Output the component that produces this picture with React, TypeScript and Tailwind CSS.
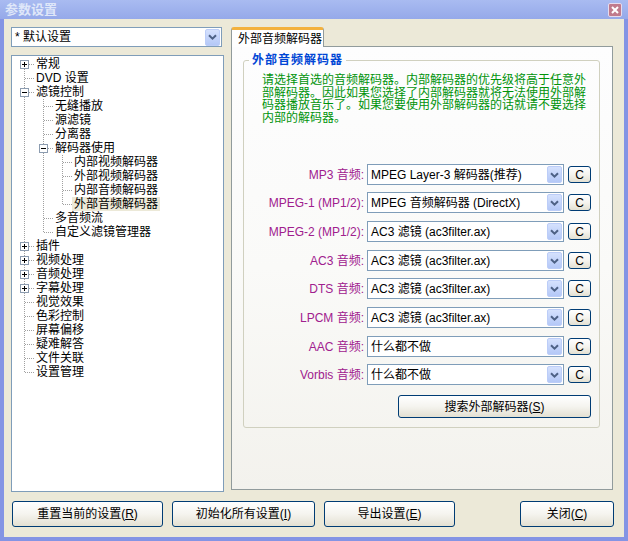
import React from "react";

type TreeNode = {
  label: string;
  level: number;
  box?: "+" | "-";
  first?: boolean;
  last?: boolean;
  selected?: boolean;
};

const TREE: TreeNode[] = [
  { label: "常规", level: 0, box: "+", first: true },
  { label: "DVD 设置", level: 0 },
  { label: "滤镜控制", level: 0, box: "-" },
  { label: "无缝播放", level: 1 },
  { label: "源滤镜", level: 1 },
  { label: "分离器", level: 1 },
  { label: "解码器使用", level: 1, box: "-" },
  { label: "内部视频解码器", level: 2 },
  { label: "外部视频解码器", level: 2 },
  { label: "内部音频解码器", level: 2 },
  { label: "外部音频解码器", level: 2, last: true, selected: true },
  { label: "多音频流", level: 1 },
  { label: "自定义滤镜管理器", level: 1, last: true },
  { label: "插件", level: 0, box: "+" },
  { label: "视频处理", level: 0, box: "+" },
  { label: "音频处理", level: 0, box: "+" },
  { label: "字幕处理", level: 0, box: "+" },
  { label: "视觉效果", level: 0 },
  { label: "色彩控制", level: 0 },
  { label: "屏幕偏移", level: 0 },
  { label: "疑难解答", level: 0 },
  { label: "文件关联", level: 0 },
  { label: "设置管理", level: 0, last: true },
];

const ROWS = [
  { label: "MP3 音频:", value: "MPEG Layer-3 解码器(推荐)", wide: false },
  { label: "MPEG-1 (MP1/2):", value: "MPEG 音频解码器 (DirectX)", wide: false },
  { label: "MPEG-2 (MP1/2):", value: "AC3 滤镜 (ac3filter.ax)", wide: true },
  { label: "AC3 音频:", value: "AC3 滤镜 (ac3filter.ax)", wide: true },
  { label: "DTS 音频:", value: "AC3 滤镜 (ac3filter.ax)", wide: false },
  { label: "LPCM 音频:", value: "AC3 滤镜 (ac3filter.ax)", wide: true },
  { label: "AAC 音频:", value: "什么都不做", wide: true },
  { label: "Vorbis 音频:", value: "什么都不做", wide: false },
];

const DOT = "#a0a0a0";

function TreeCell({ own, node }: { own: boolean; node?: TreeNode }) {
  return (
    <svg width="19" height="14" viewBox="0 0 19 14" shapeRendering="crispEdges" className="shrink-0">
      {!own && <line x1="9.5" y1="0" x2="9.5" y2="14" stroke={DOT} strokeDasharray="1 1" />}
      {own && node && (
        <>
          {!node.first && <line x1="9.5" y1="0" x2="9.5" y2="7" stroke={DOT} strokeDasharray="1 1" />}
          {!node.last && <line x1="9.5" y1="8" x2="9.5" y2="14" stroke={DOT} strokeDasharray="1 1" />}
          <line x1="10" y1="7.5" x2="19" y2="7.5" stroke={DOT} strokeDasharray="1 1" />
          {node.box && (
            <>
              <rect x="5.5" y="3.5" width="8" height="8" fill="#fff" stroke="#8c9cb0" />
              <line x1="7" y1="7.5" x2="12" y2="7.5" stroke="#000" />
              {node.box === "+" && <line x1="9.5" y1="5" x2="9.5" y2="10" stroke="#000" />}
            </>
          )}
        </>
      )}
    </svg>
  );
}

function Chevron() {
  return (
    <svg width="9" height="6" viewBox="0 0 9 6">
      <path d="M1 1.2 L4.5 4.6 L8 1.2" fill="none" stroke="#4d6185" strokeWidth="2" />
    </svg>
  );
}

function DropButton() {
  return (
    <div className="flex h-[17px] w-[15px] shrink-0 items-center justify-center rounded-[2px] border border-[#bccdf8] bg-gradient-to-b from-[#d5e1fd] to-[#b4c8f7]">
      <Chevron />
    </div>
  );
}

function Combo({ value, className }: { value: string; className: string }) {
  return (
    <div className={`flex items-center border border-[#7f9db9] bg-white pr-[1px] ${className}`}>
      <span className="flex-1 truncate pl-[3px] text-[12px] leading-[14px] text-black">{value}</span>
      <DropButton />
    </div>
  );
}

function XpButton({ children, className }: { children: React.ReactNode; className: string }) {
  return (
    <div
      className={`flex shrink-0 items-center justify-center rounded-[3px] border border-[#003c74] bg-gradient-to-b from-white via-[#f5f4ef] to-[#e3e0d2] text-[12px] leading-[14px] text-black ${className}`}
    >
      {children}
    </div>
  );
}

export default function App() {
  return (
    <div className="flex h-[541px] w-[628px] flex-col bg-[#8494e4] font-['Liberation_Sans','Noto_Sans_CJK_SC',sans-serif] text-[12px] text-black">
      {/* title bar */}
      <div className="flex h-[19px] shrink-0 items-center bg-gradient-to-b from-[#a9bbf1] to-[#95a9e9] pl-[5px] pr-[6px]">
        <span className="text-[13px] font-bold leading-[15px] text-[#dfe7f9]">参数设置</span>
        <div className="ml-auto flex h-[14px] w-[14px] items-center justify-center rounded-[2px] border border-[#e6dbee] bg-[#c07a8c]">
          <svg width="8" height="8" viewBox="0 0 8 8">
            <path d="M1 1 L7 7 M7 1 L1 7" stroke="#fff" strokeWidth="2" />
          </svg>
        </div>
      </div>

      {/* body */}
      <div className="mx-[4px] mb-[4px] flex flex-1 flex-col bg-[#ece9d8]">
        <div className="flex items-start pl-[7px] pt-[8px]">
          {/* left column */}
          <div className="flex w-[213px] flex-col">
            <Combo value="* 默认设置" className="h-[20px] w-[211px]" />
            <div className="mt-[8px] h-[437px] border border-[#7f9db9] bg-white pl-[3px] pt-[1px]">
              {TREE.map((n) => (
                <div key={n.label} className="flex h-[14px] items-center">
                  {Array.from({ length: n.level }).map((_, i) => (
                    <TreeCell key={i} own={false} />
                  ))}
                  <TreeCell own node={n} />
                  <span className={`whitespace-nowrap px-[2px] leading-[14px] ${n.selected ? "bg-[#ece9d8]" : ""}`}>
                    {n.label}
                  </span>
                </div>
              ))}
            </div>
          </div>

          {/* right column */}
          <div className="ml-[7px] flex w-[382px] flex-col">
            <div className="flex h-[19px]">
              <div className="relative z-10 -mb-px flex w-[93px] items-center rounded-t-[3px] border-x border-t-[3px] border-x-[#919b9c] border-t-[#f3b13d] bg-white pl-[6px] leading-[14px]">
                外部音频解码器
              </div>
            </div>
            <div className="h-[444px] border border-[#919b9c] bg-gradient-to-b from-[#fdfdfe] via-[#fafaf8] to-[#f3f2ed] pt-[6px]">
              <fieldset className="ml-[11px] mr-[12px] rounded-[3px] border border-[#d0d0bf] pb-[9px]">
                <legend className="ml-[5px] px-[3px] text-[12px] font-bold leading-[14px] tracking-[1px] text-[#0046d5]">
                  外部音频解码器
                </legend>
                <p className="mt-[7px] pl-[18px] text-[12px] leading-[12.6px] text-[#00930b]">
                  请选择首选的音频解码器。内部解码器的优先级将高于任意外
                  <br />
                  部解码器。因此如果您选择了内部解码器就将无法使用外部解
                  <br />
                  码器播放音乐了。如果您要使用外部解码器的话就请不要选择
                  <br />
                  内部的解码器。
                </p>
                <div className="mt-[40px] flex flex-col pr-[8px]">
                  {ROWS.map((r, i) => (
                    <div
                      key={r.label}
                      className={`flex items-center justify-end ${i === 0 ? "" : r.wide ? "mt-[8px]" : "mt-[7px]"}`}
                    >
                      <span className="mr-[3px] whitespace-nowrap leading-[14px] text-[#a0208e]">{r.label}</span>
                      <Combo value={r.value} className="h-[21px] w-[197px]" />
                      <XpButton className="ml-[4px] h-[17px] w-[23px]">C</XpButton>
                    </div>
                  ))}
                  <div className="mt-[10px] flex justify-end">
                    <XpButton className="h-[23px] w-[193px]">
                      搜索外部解码器(<span className="underline">S</span>)
                    </XpButton>
                  </div>
                </div>
              </fieldset>
            </div>
          </div>
        </div>

        {/* bottom buttons */}
        <div className="mt-[9px] flex pl-[8px] pr-[10px]">
          <XpButton className="h-[26px] w-[151px]">
            重置当前的设置(<span className="underline">R</span>)
          </XpButton>
          <XpButton className="ml-[9px] h-[26px] w-[143px]">
            初始化所有设置(<span className="underline">I</span>)
          </XpButton>
          <XpButton className="ml-[9px] h-[26px] w-[131px]">
            导出设置(<span className="underline">E</span>)
          </XpButton>
          <XpButton className="ml-auto h-[26px] w-[94px]">
            关闭(<span className="underline">C</span>)
          </XpButton>
        </div>
      </div>
    </div>
  );
}
